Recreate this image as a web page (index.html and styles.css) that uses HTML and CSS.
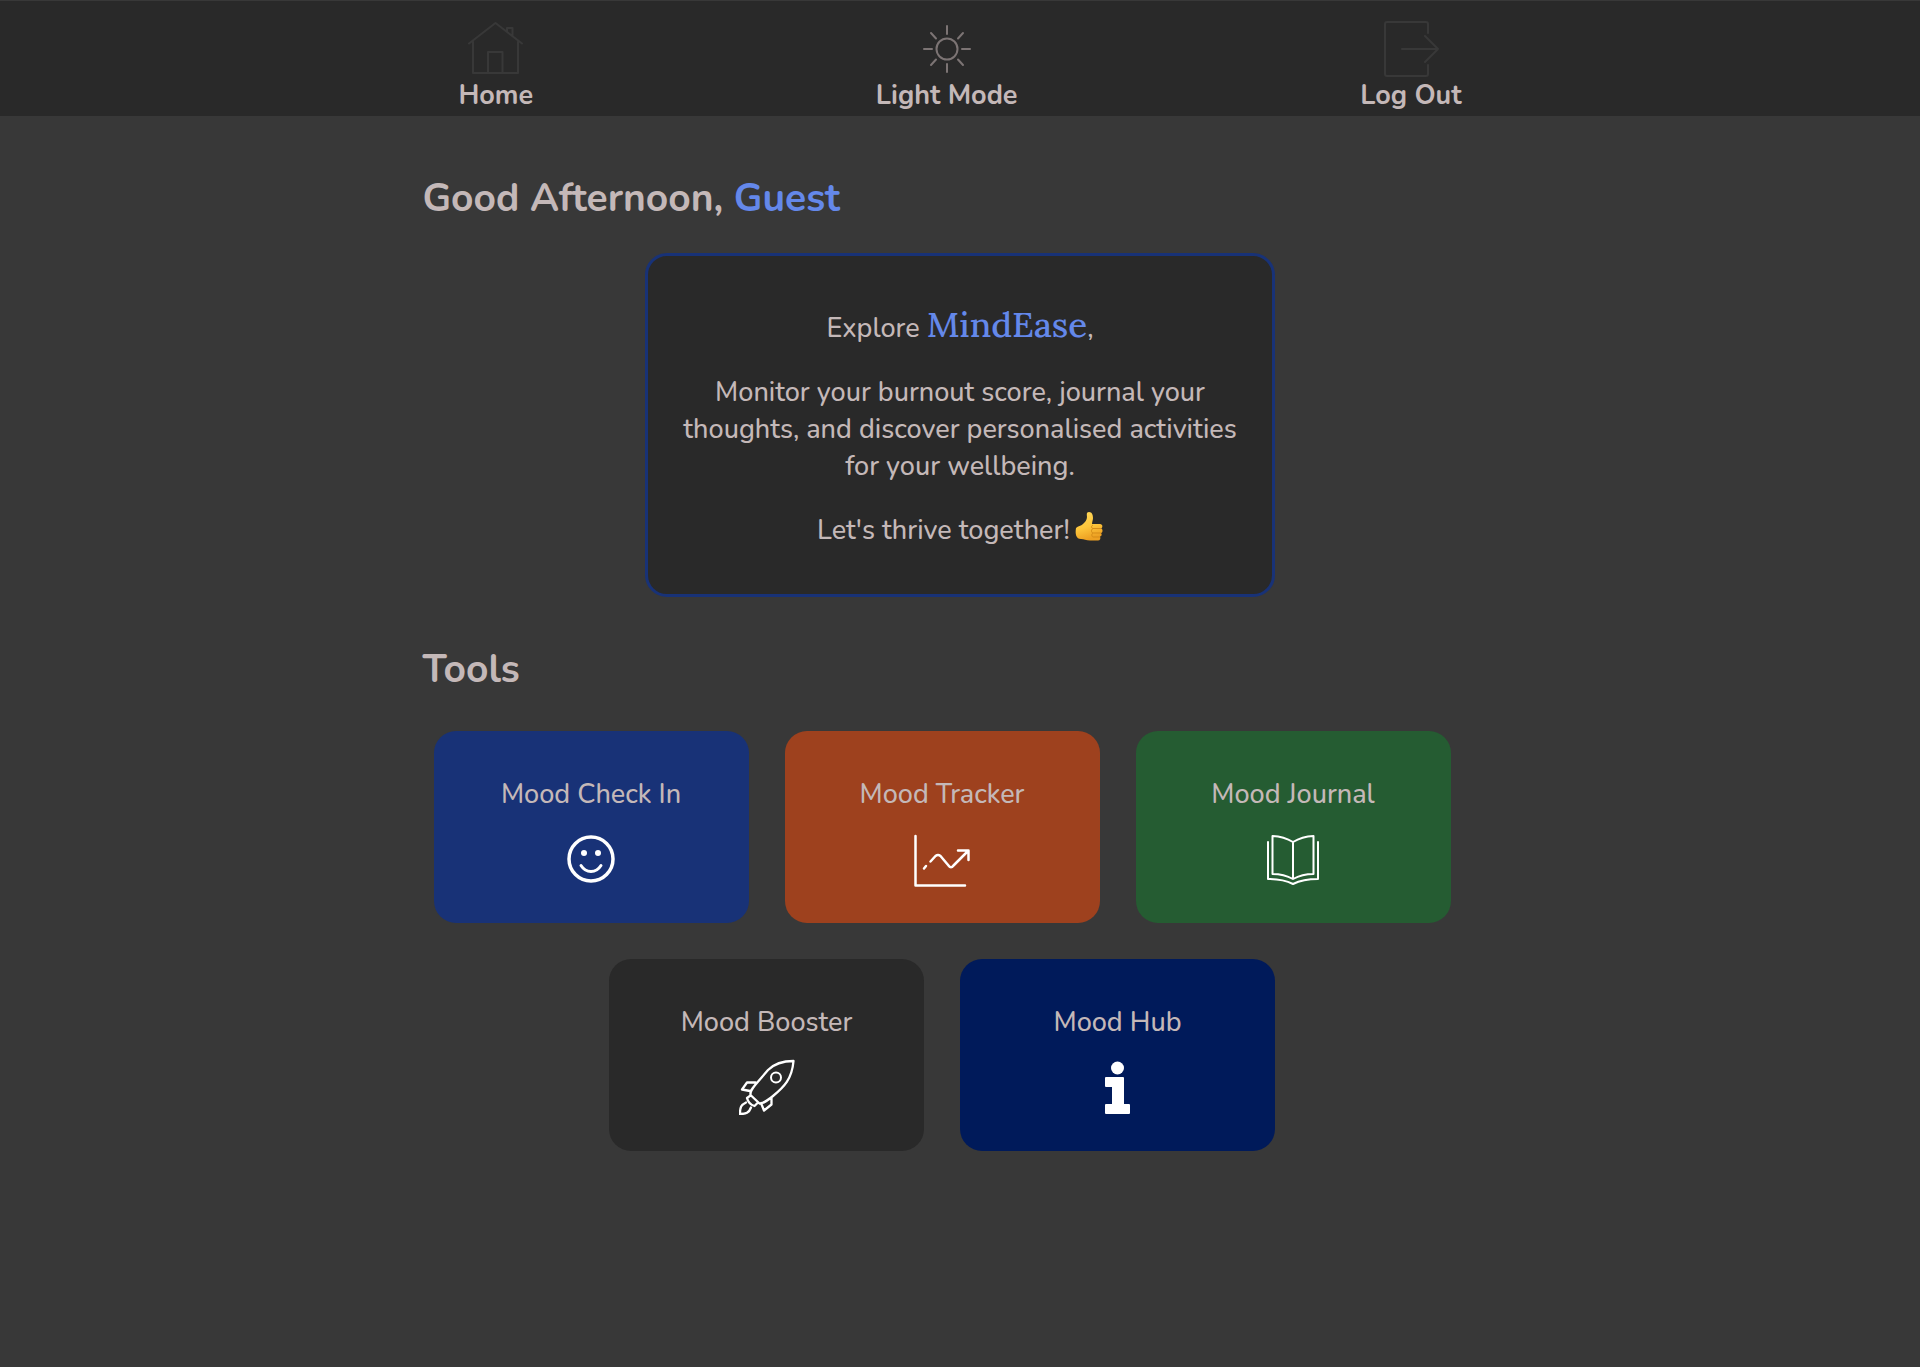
FILE: index.html
```html
<!DOCTYPE html>
<html lang="en">
<head>
<meta charset="utf-8">
<meta name="viewport" content="width=device-width, initial-scale=1">
<title>MindEase</title>
<link rel="stylesheet" href="styles.css">
</head>
<body>
<header class="site-header">
  <nav class="nav wrap">
    <a class="nav-item" href="#home">
      <svg class="icon icon-dim" viewBox="0 0 56 56" aria-hidden="true"><path d="M1 22.500 27.500 2 54 22.500M5 20.500V52h45V20.500M20 52V31h14.500v21M39 10.500V7h5.500v8"/></svg>
      <span>Home</span>
    </a>
    <button class="nav-item" type="button">
      <svg class="icon icon-sun" viewBox="0 0 56 56" aria-hidden="true"><circle cx="28" cy="28" r="10.500"/><path d="M28 5v8M28 43v8M5 28h8M43 28h8M12 12l5 5.500M44 12l-5 5.500M12 44l5-5.500M44 44l-5-5.500"/></svg>
      <span>Light Mode</span>
    </button>
    <a class="nav-item" href="#logout">
      <svg class="icon icon-dim" viewBox="0 0 56 56" aria-hidden="true"><path d="M45 12V3q0-2-2-2H4Q2 1 2 3v50q0 2 2 2h39q2 0 2-2v-9M19 28h36M42 15l13 13-13 13"/></svg>
      <span>Log Out</span>
    </a>
  </nav>
</header>
<main class="wrap">
  <h1 class="heading">Good Afternoon, <span class="accent">Guest</span></h1>
  <section class="intro">
    <p>Explore <span class="brand">MindEase</span>,</p>
    <p>Monitor your burnout score, journal your thoughts, and discover personalised activities for your wellbeing.</p>
    <p>Let's thrive together!
      <svg class="thumb" viewBox="0 0 28 30" role="img" aria-label="thumbs up">
        <defs><linearGradient id="skin" x1="0" y1="0" x2="0.300" y2="1"><stop offset="0" stop-color="#ffd95c"/><stop offset="0.600" stop-color="#fdc53b"/><stop offset="1" stop-color="#eda022"/></linearGradient></defs>
        <path fill="url(#skin)" d="M1 16c2-2 5-2 7-4 2-2 4-4 4-7 0-2-1-5 2-5 3 0 4 3 4 6 0 2-1 4-1 6h8c3 0 3 4 1 4.500 2 .5 2 4 0 4.500 1 1 1 3-1 3.500 1 2 0 4-2 4h-8c-4 0-6-1.500-9-1.500C1 27 0 22 1 16z"/>
        <path fill="none" stroke="#d58b18" stroke-width="1" d="M18 16.500h8M18 21h8M18 25h7M18 13c-2 1-2 3 0 3.500-2 1-2 4 0 4.500-2 1-1 4 0 4"/>
      </svg>
    </p>
  </section>
  <h2 class="heading">Tools</h2>
  <div class="tools">
    <a class="tool check-in" href="#check-in">
      <span>Mood Check In</span>
      <svg class="icon" viewBox="0 0 56 56" aria-hidden="true"><g stroke-width="3.500"><circle cx="28" cy="28" r="22"/><path stroke-width="3" d="M18 34.500c5 8 15 8 20 0"/></g><g fill="#fff" stroke="none"><circle cx="21" cy="22" r="3"/><circle cx="35" cy="22" r="3"/></g></svg>
    </a>
    <a class="tool tracker" href="#tracker">
      <span>Mood Tracker</span>
      <svg class="icon" viewBox="0 0 56 56" aria-hidden="true"><path stroke-width="2.500" d="M1.500 5v49.500H51M10 37.500l2-2.500M16.500 30.500l5-5.500q2.500-2 5 0l8 9.500q2.500 3.500 5 0L54 20M44 19.500h10.500V29"/></svg>
    </a>
    <a class="tool journal" href="#journal">
      <span>Mood Journal</span>
      <svg class="icon" viewBox="0 0 56 56" aria-hidden="true"><path d="M28 11Q19 5.500 7.500 5v38Q19 43 28 48q9-5 20.500-5V5Q37 5.500 28 11zM28 11v37M3 11v37q15 0 25 5 10-5 25-5V11"/></svg>
    </a>
    <a class="tool booster" href="#booster">
      <span>Mood Booster</span>
      <svg class="icon" viewBox="1 0 56 56" aria-hidden="true"><path stroke-width="2.300" d="M55.500 2C43 2 36 5 30 11L18 25c-4 5-6 7-5.500 11l9 8.500c4 0 7-2 13.500-7.500C46 28 54 20 55.500 2zM17.500 23.500H9L4 30.500l8 1.500M33.500 38.500v7L26 51.500l-3-7.500M12.500 36.500 9 39c1 4 4 7 7.500 8l3-3M8 43.500C3 46 2 48 2 55c6 0 9-1 11-6.500"/><circle cx="38" cy="18.500" r="5"/></svg>
    </a>
    <a class="tool hub" href="#hub">
      <span>Mood Hub</span>
      <svg class="icon" viewBox="0 0 56 56" aria-hidden="true"><g fill="#fff" stroke="none"><circle cx="27.500" cy="9" r="6.500"/><path d="M16 18h17q1 0 1 1v26h5q1 0 1 1v8q0 1-1 1H16q-1 0-1-1v-8q0-1 1-1h6V28h-6q-1 0-1-1v-8q0-1 1-1z"/></g></svg>
    </a>
  </div>
</main>
</body>
</html>
```
FILE: styles.css
```css
* {
  box-sizing: border-box;
}

body {
  margin: 0;
  min-height: 100vh;
  background: #383838;
  color: #c4b8b8;
  font: 500 27px/37px Nunito, Lato, sans-serif;
}

.wrap {
  width: 56%;
  min-width: 720px;
  margin: 0 auto;
}

.site-header {
  border-top: 1px solid #383838;
  background: #292929;
}

.nav {
  display: flex;
  justify-content: space-between;
  padding: 20px 36px 2px;
}

.nav-item {
  display: flex;
  flex-direction: column;
  align-items: center;
  padding: 0;
  border: 0;
  background: none;
  color: inherit;
  font: inherit;
  font-weight: 700;
  text-decoration: none;
  cursor: pointer;
}

.icon {
  display: block;
  width: 56px;
  height: 56px;
  fill: none;
  stroke: #fff;
  stroke-width: 2;
  stroke-linecap: round;
  stroke-linejoin: round;
}

.icon-dim {
  stroke: #383838;
}

.icon-sun {
  stroke: #7c7474;
}

.heading {
  margin: 0;
  font-size: 39px;
  line-height: 56px;
  font-weight: 700;
}

h1.heading {
  padding: 55px 0 26px;
}

h2.heading {
  padding: 45px 0 33px;
}

.accent,
.brand {
  color: #6488ea;
}

.brand {
  font-family: Lora, "Liberation Serif", serif;
  font-size: 35px;
  line-height: 35px;
}

.intro {
  max-width: 630px;
  margin: 0 auto;
  padding: 51px 30px 45px;
  border: 3px solid #183277;
  border-radius: 22px;
  background: #292929;
  text-align: center;
}

.intro p {
  margin: 0 0 27px;
}

.intro p:last-child {
  margin: 0;
}

.thumb {
  width: 28px;
  height: 30px;
  margin-left: -2px;
  vertical-align: -3px;
}

.tools {
  display: flex;
  flex-wrap: wrap;
  justify-content: center;
}

.tool {
  display: flex;
  flex-direction: column;
  align-items: center;
  gap: 18px;
  width: 315px;
  margin: 0 36px 36px 0;
  padding: 45px 20px 36px;
  border-radius: 22px;
  color: inherit;
  text-decoration: none;
}

.check-in {
  background: #183277;
}

.tracker {
  background: #9e411e;
}

.journal {
  background: #255c32;
}

.booster {
  background: #292929;
}

.hub {
  background: #001a5a;
}
```
